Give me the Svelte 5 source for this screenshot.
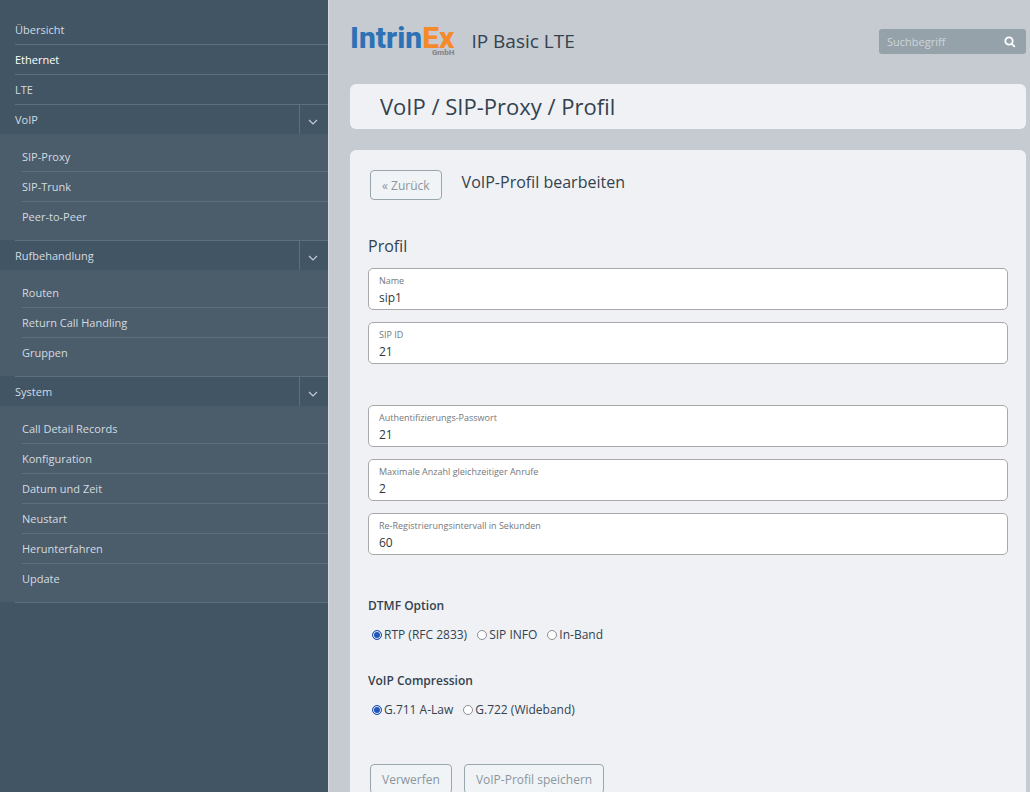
<script>
  const menu = [
    { title: 'Übersicht' },
    { title: 'Ethernet', active: true },
    { title: 'LTE' },
    { title: 'VoIP', items: ['SIP-Proxy', 'SIP-Trunk', 'Peer-to-Peer'] },
    { title: 'Rufbehandlung', items: ['Routen', 'Return Call Handling', 'Gruppen'] },
    {
      title: 'System',
      items: ['Call Detail Records', 'Konfiguration', 'Datum und Zeit', 'Neustart', 'Herunterfahren', 'Update']
    }
  ];

  let open = { VoIP: true, Rufbehandlung: true, System: true };

  let account = [
    { id: 'name', label: 'Name', value: 'sip1' },
    { id: 'sipid', label: 'SIP ID', value: '21' }
  ];

  let limits = [
    { id: 'password', label: 'Authentifizierungs-Passwort', value: '21' },
    { id: 'calls', label: 'Maximale Anzahl gleichzeitiger Anrufe', value: '2' },
    { id: 'interval', label: 'Re-Registrierungsintervall in Sekunden', value: '60' }
  ];

  const dtmfOptions = ['RTP (RFC 2833)', 'SIP INFO', 'In-Band'];
  const codecs = ['G.711 A-Law', 'G.722 (Wideband)'];

  let dtmf = dtmfOptions[0];
  let codec = codecs[0];

  const toggle = (title) => {
    open[title] = !open[title];
  };
</script>

<div class="layout">
  <nav>
    <ul class="menu">
      {#each menu as entry}
        <li>
          <div class="head">
            <a href="/" class:active={entry.active}>{entry.title}</a>
            {#if entry.items}
              <button class="toggle" aria-label={entry.title} on:click={() => toggle(entry.title)}>
                <svg viewBox="0 0 10 6" width="10" height="6"><path d="M1 1l4 4 4-4" /></svg>
              </button>
            {/if}
          </div>
          {#if entry.items && open[entry.title]}
            <ul class="submenu">
              {#each entry.items as item}
                <li><a href="/">{item}</a></li>
              {/each}
            </ul>
          {/if}
        </li>
      {/each}
    </ul>
  </nav>

  <main>
    <header>
      <a class="logo" href="/">
        <span class="brand">Intrin<b>Ex</b></span>
        <small>GmbH</small>
      </a>
      <span class="product">IP Basic LTE</span>
      <form class="search">
        <input type="text" placeholder="Suchbegriff" aria-label="Suchbegriff" />
        <button type="button" aria-label="Suchen">
          <svg viewBox="0 0 12 12" width="12" height="12">
            <circle cx="5" cy="5" r="3.7" />
            <path d="M7.8 7.8l3 3" />
          </svg>
        </button>
      </form>
    </header>

    <div class="card title">
      <h1>VoIP / SIP-Proxy / Profil</h1>
    </div>

    <form class="card content">
      <div class="top">
        <button type="button" class="btn">« Zurück</button>
        <h2>VoIP-Profil bearbeiten</h2>
      </div>

      <h2 class="section">Profil</h2>

      <div class="fields">
        {#each account as field}
          <div class="field">
            <label for={field.id}>{field.label}</label>
            <input id={field.id} type="text" bind:value={field.value} />
          </div>
        {/each}
      </div>

      <div class="fields limits">
        {#each limits as field}
          <div class="field">
            <label for={field.id}>{field.label}</label>
            <input id={field.id} type="text" bind:value={field.value} />
          </div>
        {/each}
      </div>

      <fieldset>
        <legend>DTMF Option</legend>
        <div class="options">
          {#each dtmfOptions as option}
            <label><input type="radio" name="dtmf" value={option} bind:group={dtmf} />{option}</label>
          {/each}
        </div>
      </fieldset>

      <fieldset>
        <legend>VoIP Compression</legend>
        <div class="options">
          {#each codecs as option}
            <label><input type="radio" name="codec" value={option} bind:group={codec} />{option}</label>
          {/each}
        </div>
      </fieldset>

      <div class="actions">
        <button type="button" class="btn">Verwerfen</button>
        <button type="button" class="btn">VoIP-Profil speichern</button>
      </div>
    </form>
  </main>
</div>

<style>
  :global(body) {
    background: #c6cad1;
  }

  .layout {
    display: flex;
    min-height: 100vh;
    font-family: "Open Sans", sans-serif;
    color: #33424f;
  }

  .layout * {
    box-sizing: border-box;
  }

  button,
  input {
    font-family: inherit;
  }

  /* Sidebar */
  nav {
    flex: 0 0 328px;
    padding-top: 14px;
    background: #425565;
  }

  ul {
    margin: 0;
    padding: 0;
    list-style: none;
  }

  nav a {
    flex: 1;
    font-size: 11px;
    line-height: 29px;
    color: #d3dbe1;
    text-decoration: none;
  }

  nav a.active {
    color: #fff;
    font-weight: 500;
  }

  .head {
    display: flex;
    height: 30px;
    margin-left: 15px;
    border-top: 1px solid #5d707e;
  }

  .menu > li:first-child .head {
    border-color: transparent;
  }

  .menu::after {
    content: "";
    display: block;
    margin-left: 15px;
    border-top: 1px solid #5d707e;
  }

  .toggle {
    display: flex;
    align-items: center;
    justify-content: center;
    width: 29px;
    padding: 4px 2px 0 0;
    background: none;
    border: 0;
    border-left: 1px solid #5d707e;
    cursor: pointer;
  }

  .toggle svg {
    fill: none;
    stroke: #c3cdd5;
    stroke-width: 1.2;
  }

  .submenu {
    padding: 8px 0 8px 22px;
    background: #4b5d6a;
  }

  .submenu li {
    display: flex;
    height: 30px;
    border-bottom: 1px solid #5d707e;
  }

  .submenu li:last-child {
    border-color: transparent;
  }

  /* Main */
  main {
    flex: 1;
    display: flex;
    flex-direction: column;
    min-width: 0;
    padding: 0 4px 0 21px;
    border-left: 1px solid #d5d8dd;
  }

  header {
    display: flex;
    align-items: center;
    height: 84px;
    padding-bottom: 2px;
  }

  .logo {
    display: flex;
    flex-direction: column;
    font-family: Roboto, sans-serif;
    text-decoration: none;
  }

  .brand {
    font-size: 30px;
    line-height: 23px;
    font-weight: 800;
    color: #2d72b5;
  }

  .brand b {
    font-weight: 800;
    color: #f58a2b;
  }

  .logo small {
    font-size: 8px;
    line-height: 8px;
    font-weight: 800;
    text-align: right;
    color: #84868a;
  }

  .product {
    margin-left: 17px;
    font-size: 19px;
  }

  .search {
    display: flex;
    align-items: center;
    width: 147px;
    height: 25px;
    margin-left: auto;
    background: #95a2aa;
    border-radius: 3px;
  }

  .search input {
    flex: 1;
    min-width: 0;
    padding: 0 8px;
    background: none;
    border: 0;
    font-size: 11px;
    color: #fff;
  }

  .search input::placeholder {
    color: #cdd5da;
  }

  .search button {
    display: flex;
    padding: 2px 10px 0 0;
    background: none;
    border: 0;
  }

  .search svg {
    fill: none;
    stroke: #fff;
    stroke-width: 1.8;
  }

  .card {
    background: #f0f1f5;
    border-radius: 6px;
  }

  .title {
    margin-bottom: 21px;
    padding: 0 30px;
  }

  h1,
  h2 {
    margin: 0;
    font-weight: 400;
  }

  h1 {
    font-size: 22px;
    line-height: 45px;
  }

  h2 {
    font-size: 16px;
    line-height: 24px;
  }

  .content {
    flex: 1;
    padding: 20px 18px 0;
    border-radius: 6px 6px 0 0;
  }

  .top {
    display: flex;
    align-items: flex-start;
    gap: 20px;
    padding-left: 2px;
  }

  .btn {
    height: 30px;
    padding: 0 11px;
    background: #f0f4f7;
    border: 1px solid #9aa6ae;
    border-radius: 4px;
    font-size: 12px;
    color: #8b959d;
  }

  .section {
    margin: 34px 0 10px;
  }

  .fields {
    display: flex;
    flex-direction: column;
    gap: 12px;
  }

  .limits {
    margin: 41px 0;
  }

  .field {
    display: flex;
    flex-direction: column;
    height: 42px;
    padding: 5px 10px 0;
    background: #fff;
    border: 1px solid #a9a9ab;
    border-radius: 5px;
  }

  .field label {
    font-size: 9px;
    line-height: 14px;
    color: #74777b;
  }

  .field input {
    height: 18px;
    padding: 0;
    background: none;
    border: 0;
    font-size: 12px;
    color: #33373b;
  }

  fieldset {
    margin: 0 0 26px;
    padding: 0;
    border: 0;
  }

  legend {
    padding: 0;
    font-size: 12px;
    line-height: 20px;
    font-weight: 600;
  }

  .options {
    display: flex;
    gap: 10px;
    padding: 9px 0 0 4px;
    font-size: 12px;
    line-height: 20px;
  }

  .options label {
    display: flex;
    align-items: center;
    gap: 2px;
  }

  input[type="radio"] {
    appearance: none;
    width: 10px;
    height: 10px;
    margin: 0;
    background: #fff;
    border: 1px solid #8b8e93;
    border-radius: 50%;
  }

  input[type="radio"]:checked {
    background: #2456b8;
    border-color: #2456b8;
    box-shadow: inset 0 0 0 1px #dfe8fa;
  }

  .actions {
    display: flex;
    gap: 12px;
    padding: 18px 0 0 2px;
  }
</style>
